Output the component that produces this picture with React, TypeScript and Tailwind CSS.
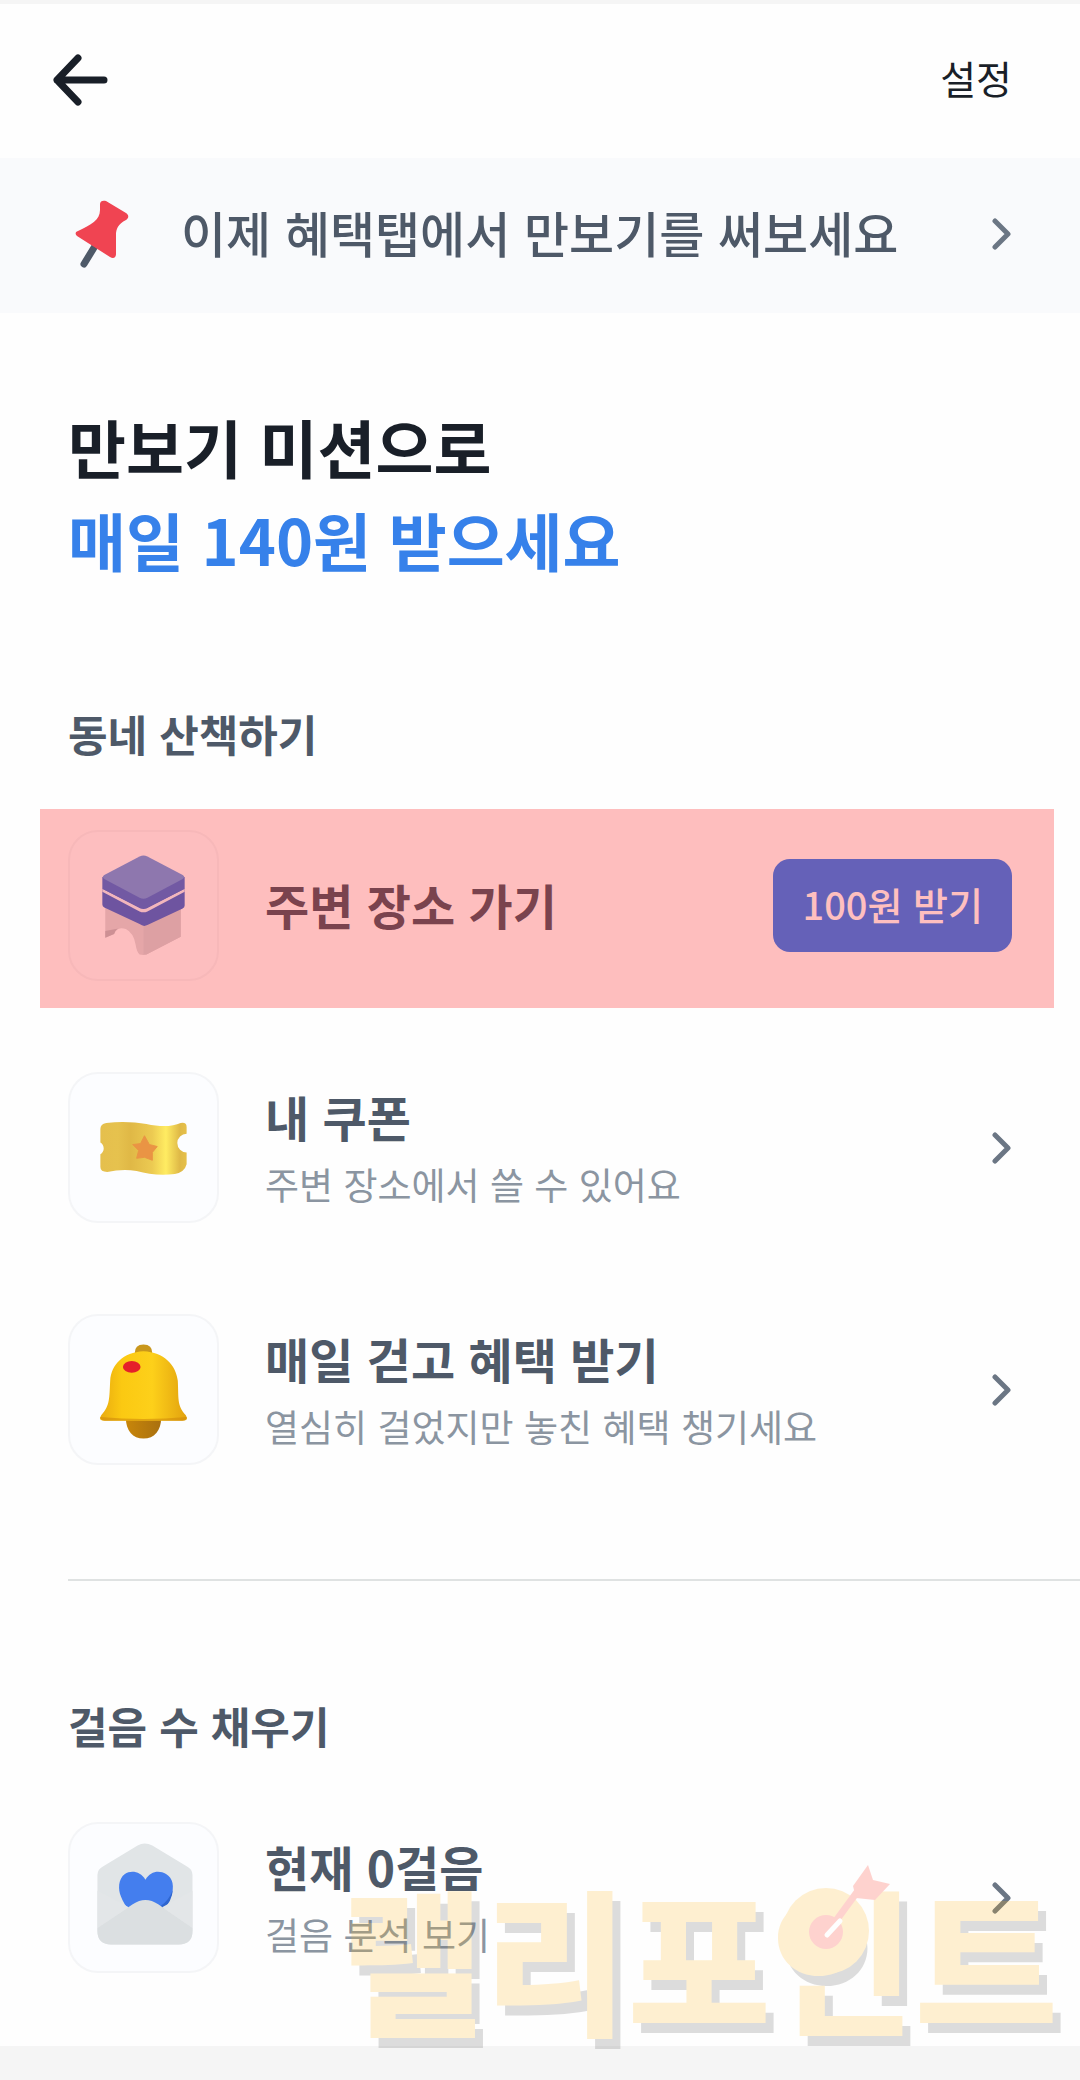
import React from "react";

type RowProps = {
  icon: React.ReactNode;
  title: string;
  desc?: string;
  action?: React.ReactNode;
  highlight?: boolean;
};

const Chevron = () => (
  <svg width="20" height="34" viewBox="0 0 20 34" fill="none" aria-hidden="true" className="shrink-0">
    <path d="M3 4L16 17L3 30" stroke="#6b7684" strokeWidth="5" strokeLinecap="round" strokeLinejoin="round" />
  </svg>
);

const PinIcon = () => (
  <svg width="54" height="68" viewBox="0 0 54 68" fill="none" aria-hidden="true">
    <path d="M20 46L9 64" stroke="#4e5968" strokeWidth="7" strokeLinecap="round" />
    <path
      d="M25 4C25 1 28 0 31 1L51 13C54 15 54 18 51 20C43 24 41 29 41 35V54C41 58 38 59 35 57L2 36C0 34 0 32 3 31C16 25 25 20 25 10Z"
      fill="#f04452"
    />
  </svg>
);

const StoolIcon = () => (
  <svg viewBox="0 0 150 150" className="size-full" aria-hidden="true">
    <path d="M36 74L75 92L113 74V107L78 125Q75 126 71 125Q68 122 67 115Q65 103 57 99Q48 96 45 104L36 108Z" fill="#dcdde0" />
    <path d="M75 88L113 74V107L78 125H75Z" fill="#d2d5d9" />
    <path d="M36 108V101L52 98Q47 98 45 104Z" fill="#bcc0c6" />
    <path d="M33 58H117V75Q117 77 115 78L79 95Q75 97 71 94L35 77Q33 76 33 74Z" fill="#3d70d6" />
    <path d="M33 58L72 78Q75 79 78 78L117 58V61L79 81Q75 83 71 81L33 61Z" fill="#eef3fb" />
    <path d="M33 46H117V58L79 77Q75 79 71 77L33 58Z" fill="#4377da" />
    <path d="M71 25Q75 23 79 25L115 44Q118 46 115 48L79 67Q75 69 71 67L35 48Q32 46 35 44Z" fill="#689fe8" />
  </svg>
);

const TicketIcon = () => (
  <svg viewBox="0 0 150 150" className="size-full" aria-hidden="true">
    <defs>
      <linearGradient id="ticket" x1="0" x2="1">
        <stop offset="0" stopColor="#e5bf4d" />
        <stop offset="0.2" stopColor="#e6c24e" />
        <stop offset="0.35" stopColor="#e0b846" />
        <stop offset="0.6" stopColor="#ecca52" />
        <stop offset="0.76" stopColor="#ffec62" />
        <stop offset="0.92" stopColor="#dfb947" />
        <stop offset="1" stopColor="#e6c04a" />
      </linearGradient>
    </defs>
    <path
      d="M31 56Q31 51 37 50C52 48 66 49 78 51C92 54 104 54 113 50Q119 49 119 54V61A7 7 0 0 0 119 80V92Q117 100 107 102C92 104 80 102 68 99C57 97 48 98 38 100Q31 100 31 95V82A7 7 0 0 0 31 70Z"
      fill="url(#ticket)"
    />
    <path
      d="M76 63L81 72L89 74L84 80L84 88L76 85L68 86L70 78L64 72L72 71Z"
      fill="#ea9444"
      stroke="#ea9444"
      strokeWidth="1"
      strokeLinejoin="round"
    />
  </svg>
);

const BellIcon = () => (
  <svg viewBox="0 0 150 150" className="size-full" aria-hidden="true">
    <defs>
      <linearGradient id="bell" x1="0" x2="1">
        <stop offset="0" stopColor="#e9ab10" />
        <stop offset="0.25" stopColor="#fbc912" />
        <stop offset="0.6" stopColor="#fdd01a" />
        <stop offset="1" stopColor="#e2a20f" />
      </linearGradient>
      <linearGradient id="clapper" x1="0" x2="1">
        <stop offset="0" stopColor="#c8860a" />
        <stop offset="1" stopColor="#a9700f" />
      </linearGradient>
    </defs>
    <path d="M66 38Q66 29 75 29Q84 29 84 38Z" fill="#c9971c" />
    <path d="M57 104H93C93 117 86 125 75 125C64 125 57 117 57 104Z" fill="url(#clapper)" />
    <path
      d="M75 36C54 37 42 50 41 66C40 84 41 91 32 101Q28 107 36 107H114Q122 107 118 101C109 91 111 84 110 66C108 50 96 37 75 36Z"
      fill="url(#bell)"
    />
    <path d="M31 103Q32 107 37 107H113Q118 107 119 103Q75 107 31 103Z" fill="#d08a0c" opacity="0.6" />
    <ellipse cx="63" cy="52" rx="9" ry="6" fill="#e5202a" />
  </svg>
);

const EnvelopeIcon = () => (
  <svg viewBox="0 0 150 150" className="size-full" aria-hidden="true">
    <path
      d="M69 22Q76 18 84 22L119 43Q125 46 125 52V109Q125 123 111 123H42Q28 123 28 109V52Q28 46 34 43Z"
      fill="#e1e5e7"
    />
    <path
      d="M77 57C72 48 62 47 56 51C49 56 49 67 52 74Q55 82 60 87L95 87Q100 82 103 74C107 64 105 55 98 51C91 47 82 48 77 57Z"
      fill="#447eee"
    />
    <path d="M105 67Q104 79 95 87L92 84Q101 78 105 67Z" fill="#2f66cf" />
    <path d="M28 109V106L64 82Q77 73 90 82L125 106V109Q125 123 111 123H42Q28 123 28 109Z" fill="#dbdfe1" />
    <path d="M28 68V106L60 85ZM125 68V106L94 85Z" fill="#e3e6e8" />
  </svg>
);

const Row = ({ icon, title, desc, action, highlight }: RowProps) => (
  <li className="relative flex items-center">
    <div className="size-[151px] shrink-0 rounded-[30px] border-2 border-[#f4f5f7] bg-[#fcfdff]">{icon}</div>
    <div className={desc ? "ml-[46px] grow" : "ml-[46px] grow pb-1"}>
      <h3 className="text-[48px] leading-[72px] font-bold text-[#4e5968]">{title}</h3>
      {desc && <p className="text-[37px] leading-[64px] text-[#8b95a1]">{desc}</p>}
    </div>
    {action ?? (
      <a href="#" aria-label={title}>
        <Chevron />
      </a>
    )}
    {highlight && (
      <div className="pointer-events-none absolute -top-[21px] -right-[42px] -bottom-[27px] -left-[28px] bg-[#ff0000]/25" />
    )}
  </li>
);

const Watermark = () => (
  <div className="pointer-events-none absolute right-[22px] -bottom-[4px] opacity-20">
    <p className="text-[156px] leading-[190px] font-black text-[#ffb81e] [text-shadow:8px_10px_0_#5a5a5a]">
      랠리포인트
    </p>
    <svg width="110" height="120" viewBox="0 0 110 120" className="absolute top-0 right-[168px]" aria-hidden="true">
      <ellipse cx="46" cy="71" rx="43" ry="43" fill="#ffb81e" />
      <circle cx="46" cy="72" r="17" fill="#ff2a14" />
      <path d="M47 73L80 28" stroke="#ff2a14" strokeWidth="7" />
      <path d="M47 75L60 61" stroke="#fff" strokeWidth="5" strokeLinecap="round" />
      <path d="M73 26L88 5L93 20L110 24L95 40L76 38Z" fill="#ff2a14" />
    </svg>
  </div>
);

export default function App() {
  return (
    <div lang="ko" className="bg-[#f5f5f5] pt-1 pb-[34px] font-['Noto_Sans_CJK_KR',sans-serif]">
      <main className="relative bg-[#fefefe]">
        <header className="flex h-[154px] items-center justify-between pr-[68px] pb-1 pl-[49px]">
          <button type="button" aria-label="뒤로" className="cursor-pointer">
            <svg width="60" height="56" viewBox="0 0 60 56" fill="none" aria-hidden="true">
              <path
                d="M29 7L8 29L29 51M8 29H55"
                stroke="#191f28"
                strokeWidth="7"
                strokeLinecap="round"
                strokeLinejoin="round"
              />
            </svg>
          </button>
          <button type="button" className="cursor-pointer pb-1 text-[39px] leading-[60px] text-[#191f28]">
            설정
          </button>
        </header>

        <a href="#" className="flex h-[155px] items-center bg-[#f9fafc] pr-[68px] pb-1 pl-[75px]">
          <PinIcon />
          <span className="ml-[52px] grow pb-1 text-[49px] leading-[72px] font-medium text-[#4e5968]">
            이제 혜택탭에서 만보기를 써보세요
          </span>
          <Chevron />
        </a>

        <h1 className="px-[68px] pt-[86px] text-[63px] leading-[93px] font-bold text-[#191f28]">
          만보기 미션으로
          <br />
          <span className="text-[#3681ea]">매일 140원 받으세요</span>
        </h1>

        <section className="px-[68px] pt-[118px]">
          <h2 className="text-[43px] leading-[60px] font-bold text-[#4e5968]">동네 산책하기</h2>
          <ul className="mt-[67px] flex flex-col gap-[91px]">
            <Row
              icon={<StoolIcon />}
              title="주변 장소 가기"
              highlight
              action={
                <button
                  type="button"
                  className="h-[93px] cursor-pointer rounded-[17px] bg-[#3182f6] px-[29px] pb-1 text-[38px] leading-[60px] font-medium text-white"
                >
                  100원 받기
                </button>
              }
            />
            <Row icon={<TicketIcon />} title="내 쿠폰" desc="주변 장소에서 쓸 수 있어요" />
            <Row icon={<BellIcon />} title="매일 걷고 혜택 받기" desc="열심히 걸었지만 놓친 혜택 챙기세요" />
          </ul>
        </section>

        <hr className="mt-[114px] ml-[68px] border-t-2 border-[#dfe2e2]" />

        <section className="px-[68px] pt-[114px] pb-[73px]">
          <h2 className="text-[43px] leading-[60px] font-bold text-[#4e5968]">걸음 수 채우기</h2>
          <ul className="mt-[67px]">
            <Row icon={<EnvelopeIcon />} title="현재 0걸음" desc="걸음 분석 보기" />
          </ul>
        </section>

        <Watermark />
      </main>
    </div>
  );
}
